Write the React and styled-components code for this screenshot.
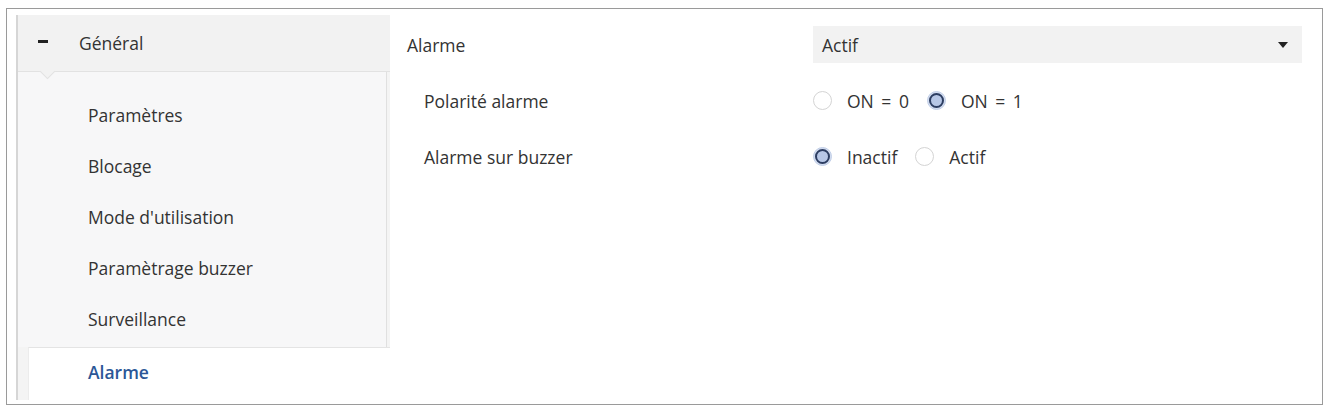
import React from "react";
import styled, { createGlobalStyle } from "styled-components";

const Global = createGlobalStyle`
  html, body { margin: 0; padding: 0; background: #ffffff; }
  body { font-family: "Open Sans", "Noto Sans", sans-serif; color: #333; }
  * { box-sizing: border-box; }
`;

const Frame = styled.div`
  margin: 8px 3px 0 6px;
  height: 397px;
  border: 1px solid #9a9a9a;
  display: flex;
  padding: 6px 0 4px 9px;
  background: #fff;
`;

const Sidebar = styled.nav`
  width: 374px;
  flex: none;
  display: flex;
  flex-direction: column;
  border-left: 2px solid #d6d6d6;
  background: #f4f4f4;
`;

const Header = styled.div`
  position: relative;
  z-index: 1;
  height: 57px;
  display: flex;
  align-items: center;
  background: #f2f2f2;
  border-bottom: 1px solid #e2e2e2;
  padding-left: 20px;
  font-size: 17.5px;
  color: #333;
  &::after {
    content: "";
    position: absolute;
    left: 24px;
    bottom: -6px;
    width: 10px;
    height: 10px;
    background: #f2f2f2;
    border-right: 1px solid #e2e2e2;
    border-bottom: 1px solid #e2e2e2;
    transform: rotate(45deg);
  }
`;

const Minus = styled.span`
  width: 10px;
  height: 3px;
  background: #222;
  margin-right: 31px;
  margin-top: -4px;
`;

const List = styled.div`
  background: #f7f7f8;
  border-right: 1px solid #e0e0e0;
  margin-right: 3px;
  padding: 17px 0 3px 0;
`;

const Item = styled.div`
  height: 51px;
  display: flex;
  align-items: center;
  padding-left: 70px;
  font-size: 17.5px;
  color: #333;
`;

const Selected = styled.div`
  flex: 1;
  margin-left: 10px;
  background: #fff;
  border-top: 1px solid #e4e4e4;
  border-left: 1px solid #ececec;
  display: flex;
  align-items: center;
  padding-left: 59px;
  padding-bottom: 4px;
  font-size: 17.5px;
  font-weight: 600;
  color: #2b5797;
`;

const Content = styled.section`
  flex: 1;
  display: grid;
  grid-template-columns: 406px 1fr;
  grid-auto-rows: 37px;
  row-gap: 19px;
  align-content: start;
  padding: 11px 20px 0 17px;
  font-size: 17.5px;
`;

const Label = styled.div`
  display: flex;
  align-items: center;
  padding-left: ${(p) => (p.$sub ? 17 : 0)}px;
  color: #333;
`;

const Select = styled.div`
  display: flex;
  align-items: center;
  justify-content: space-between;
  background: #f2f2f2;
  padding: 0 14px 0 9px;
  color: #333;
`;

const Caret = styled.span`
  width: 0;
  height: 0;
  border-left: 5px solid transparent;
  border-right: 5px solid transparent;
  border-top: 6px solid #222;
`;

const RadioGroup = styled.div`
  display: flex;
  align-items: center;
  gap: 18px;
`;

const Option = styled.label`
  display: flex;
  align-items: center;
  gap: 15px;
  color: #333;
  word-spacing: 3px;
`;

const Circle = styled.span`
  width: 19px;
  height: 19px;
  border-radius: 50%;
  display: flex;
  align-items: center;
  justify-content: center;
  background: ${(p) => (p.$on ? "#d3ddf0" : "#fff")};
  border: 1px solid ${(p) => (p.$on ? "#c2cfe8" : "#d4d4d4")};
  &::after {
    content: "";
    display: ${(p) => (p.$on ? "block" : "none")};
    width: 11px;
    height: 11px;
    border-radius: 50%;
    border: 2px solid #2d3e62;
    background: #b7c7e6;
  }
`;

const Radio = ({ on, children }) => (
  <Option>
    <Circle $on={on} />
    {children}
  </Option>
);

export default function App() {
  return (
    <>
      <Global />
      <Frame>
        <Sidebar>
          <Header>
            <Minus />
            Général
          </Header>
          <List>
            <Item>Paramètres</Item>
            <Item>Blocage</Item>
            <Item>Mode d'utilisation</Item>
            <Item>Paramètrage buzzer</Item>
            <Item>Surveillance</Item>
          </List>
          <Selected>Alarme</Selected>
        </Sidebar>
        <Content>
          <Label>Alarme</Label>
          <Select>
            Actif
            <Caret />
          </Select>
          <Label $sub>Polarité alarme</Label>
          <RadioGroup>
            <Radio>ON = 0</Radio>
            <Radio on>ON = 1</Radio>
          </RadioGroup>
          <Label $sub>Alarme sur buzzer</Label>
          <RadioGroup>
            <Radio on>Inactif</Radio>
            <Radio>Actif</Radio>
          </RadioGroup>
        </Content>
      </Frame>
    </>
  );
}
